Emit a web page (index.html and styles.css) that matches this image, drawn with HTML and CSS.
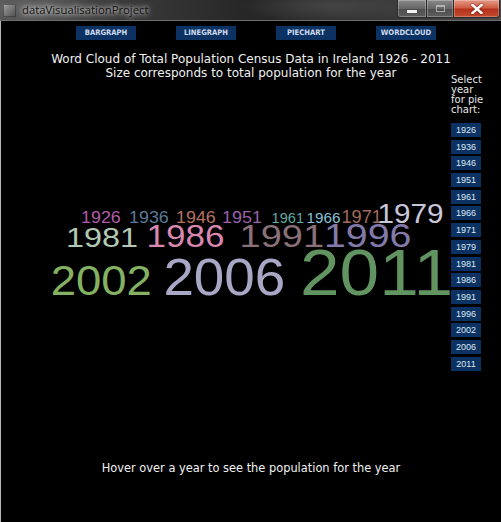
FILE: index.html
```html
<!DOCTYPE html>
<html>
<head>
<meta charset="utf-8">
<title>dataVisualisationProject</title>
<link rel="stylesheet" href="styles.css">
</head>
<body>
<div class="window">
  <div class="titlebar">
    <div class="app-icon"></div>
    <div class="app-title">dataVisualisationProject</div>
    <div class="controls">
      <div class="ctl ctl-min"><span class="glyph-min"></span></div>
      <div class="ctl ctl-max"><span class="glyph-max"></span></div>
      <div class="ctl ctl-close">
        <svg class="glyph-close" width="12" height="10" viewBox="0 0 12 10"><path d="M1.5 1 L10.5 9 M10.5 1 L1.5 9" stroke="#fff" stroke-width="2.4" stroke-linecap="square"/></svg>
      </div>
    </div>
  </div>
  <div class="client">
    <nav class="tabs">
      <div class="tab">BARGRAPH</div>
      <div class="tab">LINEGRAPH</div>
      <div class="tab">PIECHART</div>
      <div class="tab">WORDCLOUD</div>
    </nav>
    <header class="heading">
      <div>Word Cloud of Total Population Census Data in Ireland 1926 - 2011</div>
      <div>Size corresponds to total population for the year</div>
    </header>
    <aside class="sidebar">
      <div class="side-label">Select<br>year<br>for pie<br>chart:</div>
      <div class="years">
        <div class="year">1926</div>
        <div class="year">1936</div>
        <div class="year">1946</div>
        <div class="year">1951</div>
        <div class="year">1961</div>
        <div class="year">1966</div>
        <div class="year">1971</div>
        <div class="year">1979</div>
        <div class="year">1981</div>
        <div class="year">1986</div>
        <div class="year">1991</div>
        <div class="year">1996</div>
        <div class="year">2002</div>
        <div class="year">2006</div>
        <div class="year">2011</div>
      </div>
    </aside>
    <svg class="cloud" width="450" height="381" viewBox="1 80 450 381">
      <text x="81.1" y="223" font-size="17" textLength="39.7" lengthAdjust="spacingAndGlyphs" fill="#b25ca9">1926</text>
      <text x="129.1" y="223" font-size="17" textLength="39.7" lengthAdjust="spacingAndGlyphs" fill="#5a7b99">1936</text>
      <text x="176.1" y="223" font-size="17" textLength="39.7" lengthAdjust="spacingAndGlyphs" fill="#b87262">1946</text>
      <text x="222.1" y="223" font-size="17" textLength="40" lengthAdjust="spacingAndGlyphs" fill="#9a62aa">1951</text>
      <text x="271.6" y="223" font-size="14.5" textLength="32.5" lengthAdjust="spacingAndGlyphs" fill="#62aaa2">1961</text>
      <text x="306.6" y="223" font-size="15" textLength="34" lengthAdjust="spacingAndGlyphs" fill="#8ac2d8">1966</text>
      <text x="341.4" y="223" font-size="18" textLength="40.5" lengthAdjust="spacingAndGlyphs" fill="#a26a5a">1971</text>
      <text x="377.4" y="223" font-size="28" textLength="66" lengthAdjust="spacingAndGlyphs" fill="#c8c8da">1979</text>
      <text x="65.9" y="247" font-size="28" textLength="72" lengthAdjust="spacingAndGlyphs" fill="#b2c8b2">1981</text>
      <text x="146.5" y="247" font-size="32" textLength="77.9" lengthAdjust="spacingAndGlyphs" fill="#d888b0">1986</text>
      <text x="239.5" y="247" font-size="32" textLength="84.5" lengthAdjust="spacingAndGlyphs" fill="#8a7078">1991</text>
      <text x="324" y="247" font-size="33" textLength="87.5" lengthAdjust="spacingAndGlyphs" fill="#827aaa">1996</text>
      <text x="50.7" y="295" font-size="43" textLength="101.2" lengthAdjust="spacingAndGlyphs" fill="#84b262">2002</text>
      <text x="163.4" y="295" font-size="52" textLength="121.9" lengthAdjust="spacingAndGlyphs" fill="#a8a8c6">2006</text>
      <text x="300" y="295" font-size="65.6" textLength="153" lengthAdjust="spacingAndGlyphs" fill="#629462">2011</text>
    </svg>
    <footer class="hint">Hover over a year to see the population for the year</footer>
  </div>
</div>
</body>
</html>
```
FILE: styles.css
```css
html, body {
  margin: 0;
  padding: 0;
  background: #000;
}
body {
  width: 501px;
  height: 522px;
  overflow: hidden;
}
.window {
  width: 501px;
  height: 522px;
  display: flex;
  flex-direction: column;
}
.titlebar {
  height: 20px;
  flex: none;
  border-bottom: 1px solid #6e6e6e;
  display: flex;
  align-items: flex-start;
  background:
    radial-gradient(ellipse 60px 14px at 40px 8px, rgba(120,120,120,0.55), rgba(0,0,0,0)),
    radial-gradient(ellipse 90px 16px at 330px 6px, rgba(90,90,90,0.5), rgba(0,0,0,0)),
    linear-gradient(90deg, #585858 0%, #3a3a3a 25%, #262626 50%, #333 72%, #4a4a4a 100%);
}
.app-icon {
  width: 13px;
  height: 13px;
  margin: 4px 0 0 3px;
  border-radius: 1px;
  background: linear-gradient(135deg, #a8a8a8 0%, #7a7a7a 45%, #4c4c4c 100%);
  box-shadow: inset 0 0 0 1px rgba(40,40,40,0.5);
}
.app-title {
  margin: 2px 0 0 6px;
  font-family: "Open Sans", "DejaVu Sans", sans-serif;
  font-size: 11.3px;
  line-height: 16px;
  color: #121212;
  text-shadow: 0 0 4px rgba(255,255,255,0.95), 0 0 8px rgba(255,255,255,0.6);
}
.controls {
  margin-left: auto;
  margin-right: 1px;
  display: flex;
  height: 17px;
  border: 1px solid #2a2a2a;
  border-top: none;
  border-radius: 0 0 4px 4px;
  overflow: hidden;
}
.ctl {
  height: 17px;
  display: flex;
  align-items: center;
  justify-content: center;
  box-shadow: inset 0 0 0 1px rgba(255,255,255,0.25);
}
.ctl-min {
  width: 28px;
  background: linear-gradient(180deg, #8a8a8a 0%, #666 50%, #4e4e4e 52%, #5e5e5e 100%);
  border-right: 1px solid #2a2a2a;
}
.ctl-max {
  width: 26px;
  background: linear-gradient(180deg, #8a8a8a 0%, #666 50%, #4e4e4e 52%, #5e5e5e 100%);
  border-right: 1px solid #2a2a2a;
}
.ctl-close {
  width: 45px;
  background: linear-gradient(180deg, #e39a88 0%, #cf5a3f 48%, #b5321c 52%, #c24a30 100%);
}
.glyph-min {
  width: 10px;
  height: 3px;
  margin-top: 6px;
  background: #f4f4f4;
  box-shadow: 0 0 1px #222;
}
.glyph-max {
  width: 9px;
  height: 7px;
  box-sizing: border-box;
  border: 1px solid #cfcfcf;
  border-top-width: 2px;
  opacity: 0.7;
}
.glyph-close {
  display: block;
  filter: drop-shadow(0 0 1px rgba(80,0,0,0.8));
}
.client {
  flex: 1;
  border-left: 1px solid #b8b8b8;
  background: #000;
  display: grid;
  grid-template-columns: 450px 50px;
  grid-template-rows: auto auto auto auto;
  align-content: start;
}
.tabs {
  grid-column: 1 / -1;
  grid-row: 1;
  display: flex;
  gap: 40px;
  padding: 5px 0 0 75px;
}
.tab {
  width: 60px;
  height: 14px;
  background: #0b3262;
  color: #cfdcee;
  font-family: "DejaVu Sans Condensed", "DejaVu Sans", sans-serif;
  font-weight: bold;
  font-size: 7.6px;
  line-height: 14px;
  text-align: center;
}
.heading {
  grid-column: 1 / -1;
  grid-row: 2;
  margin-top: 12px;
  text-align: center;
  font-family: "DejaVu Sans", sans-serif;
  font-size: 12px;
  line-height: 14px;
  color: #f0f0f0;
}
.sidebar {
  grid-column: 2;
  grid-row: 2 / 4;
  padding-top: 35px;
  display: flex;
  flex-direction: column;
  align-items: flex-start;
}
.side-label {
  font-family: "DejaVu Sans", sans-serif;
  font-size: 10px;
  line-height: 10px;
  color: #e6e6e6;
}
.years {
  margin-top: 8px;
  display: flex;
  flex-direction: column;
  gap: 2.7px;
}
.year {
  width: 30px;
  height: 14px;
  background: #0b3262;
  color: #dfe8f4;
  font-family: "Liberation Sans", sans-serif;
  font-size: 9px;
  line-height: 14px;
  text-align: center;
}
.cloud {
  grid-column: 1;
  grid-row: 3;
  display: block;
  font-family: "Liberation Sans", sans-serif;
}
.hint {
  grid-column: 1 / -1;
  grid-row: 4;
  text-align: center;
  font-family: "DejaVu Sans", sans-serif;
  font-size: 11.4px;
  line-height: 14px;
  color: #f0f0f0;
}
```
